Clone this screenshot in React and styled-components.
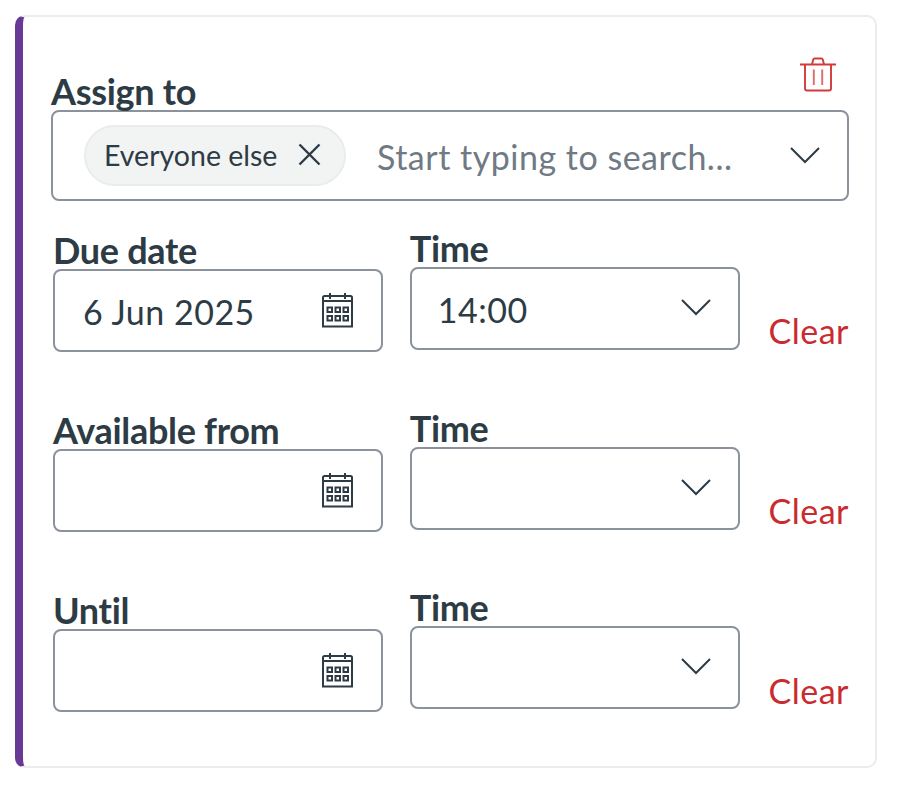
import React from 'react'
import styled, { createGlobalStyle } from 'styled-components'

const GlobalStyle = createGlobalStyle`
  html, body { margin: 0; padding: 0; background: #fff; }
  body { font-family: Lato, "Open Sans", sans-serif; color: #2d3b45; }
`

const Page = styled.div`
  padding: 15px 21px 18px 15px;
`

const Card = styled.section`
  box-sizing: border-box;
  height: 753px;
  border: 2px solid #ececec;
  border-left: 8px solid #683a96;
  border-radius: 10px;
  padding: 26px 26px 0 28px;
`

const TrashRow = styled.div`
  display: flex;
  justify-content: flex-end;
  height: 30px;
  padding-right: 13px;
  margin-top: 13px;
  margin-bottom: -12px;
  color: #d23a3a;
`

const Label = styled.label`
  display: block;
  font-size: 36px;
  font-weight: 700;
  line-height: 34px;
  height: 36px;
  letter-spacing: -0.3px;
`

const AssignField = styled.div`
  margin-bottom: 30px;
`

const AssignBox = styled.div`
  box-sizing: border-box;
  height: 91px;
  border: 2px solid #8b929c;
  border-radius: 8px;
  display: flex;
  align-items: center;
  padding: 0 27px 0 31px;
`

const Chip = styled.div`
  box-sizing: border-box;
  width: 262px;
  height: 61px;
  flex: none;
  display: flex;
  align-items: center;
  justify-content: space-between;
  padding: 0 23px 2px 18px;
  background: #f2f4f4;
  border: 2px solid #e9ecec;
  border-radius: 31px;
  font-size: 28.5px;
`

const Placeholder = styled.span`
  flex: 1;
  margin-left: 31px;
  padding-top: 2px;
  font-size: 34px;
  color: #6f7a84;
  letter-spacing: 0.5px;
`

const Row = styled.div`
  display: flex;
  align-items: flex-start;
  height: 180px;
`

const DateCol = styled.div`
  width: 330px;
  margin-left: 2px;
  padding-top: 2px;
`

const TimeCol = styled.div`
  width: 330px;
  margin-left: 27px;
  margin-top: ${p => p.$top || 0}px;
`

const Control = styled.div`
  box-sizing: border-box;
  height: 83px;
  border: 2px solid #8b929c;
  border-radius: 8px;
  display: flex;
  align-items: center;
  justify-content: space-between;
  padding: 0 27px 0 ${p => p.$left}px;
  font-size: 34px;
  letter-spacing: 0.5px;
`

const Value = styled.span`
  padding-top: 2px;
`

const Clear = styled.button`
  margin: 80px 0 0 29px;
  padding: 0;
  border: 0;
  background: none;
  font-family: inherit;
  font-size: 34px;
  line-height: 40px;
  letter-spacing: 0.5px;
  color: #c92c30;
`

const Trash = () => (
  <svg width="36" height="36" viewBox="0 0 36 36" fill="none" stroke="currentColor" strokeWidth="1.9">
    <path d="M0 8.500h36" />
    <path d="M12 8.500l1.200-5a1.500 1.500 0 0 1 1.400-1h6.800a1.500 1.500 0 0 1 1.400 1l1.200 5" />
    <path d="M5 8.500v24a2 2 0 0 0 2 2h22a2 2 0 0 0 2-2v-24" />
    <path d="M13.800 13.500v15.500M22.200 13.500v15.500" opacity="0.75" />
  </svg>
)

const CloseIcon = () => (
  <svg width="23" height="23" viewBox="0 0 23 23" fill="none" stroke="#2d3b45" strokeWidth="2.4">
    <path d="M1.500 1.500l20 20M21.500 1.500l-20 20" />
  </svg>
)

const Chevron = ({ className }) => (
  <svg className={className} width="30" height="17" viewBox="0 0 30 17" fill="none" stroke="#2d3b45" strokeWidth="2">
    <path d="M1 1l14 14L29 1" />
  </svg>
)

const TimeChevron = styled(Chevron)`
  margin-bottom: 2px;
`

const Calendar = () => (
  <svg width="32" height="35" viewBox="0 0 32 35" fill="none" stroke="#2d3b45" strokeWidth="2">
    <path d="M2.500 3h26a1.500 1.500 0 0 1 1.500 1.500V33.500H1V4.500A1.500 1.500 0 0 1 2.500 3z" />
    <path d="M1 8h29M8 0v6M23 0v6" />
    <g fill="#2d3b45" stroke="none">
      <path d="M4.500 13.500h6.500v6.500H4.500zM12.500 13.500h6.500v6.500h-6.500zM20.500 13.500h6.500v6.500h-6.500zM4.500 22h6.500v6.500H4.500zM12.500 22h6.500v6.500h-6.500zM20.500 22h6.500v6.500h-6.500z" />
    </g>
    <g fill="#fff" stroke="none">
      <path d="M6.500 15.500h2.500v2.500H6.500zM14.500 15.500h2.500v2.500h-2.500zM22.500 15.500h2.500v2.500h-2.500zM6.500 24h2.500v2.500H6.500zM14.500 24h2.500v2.500h-2.500zM22.500 24h2.500v2.500h-2.500z" />
    </g>
  </svg>
)

const rows = [
  { label: 'Due date', date: '6 Jun 2025', time: '14:00', timeTop: 0 },
  { label: 'Available from', date: '', time: '', timeTop: 0 },
  { label: 'Until', date: '', time: '', timeTop: -1 },
]

export default function App() {
  return (
    <Page>
      <GlobalStyle />
      <Card>
        <TrashRow><Trash /></TrashRow>
        <AssignField>
          <Label>Assign to</Label>
          <AssignBox>
            <Chip>Everyone else <CloseIcon /></Chip>
            <Placeholder>Start typing to search...</Placeholder>
            <Chevron />
          </AssignBox>
        </AssignField>
        {rows.map(row => (
          <Row key={row.label}>
            <DateCol>
              <Label>{row.label}</Label>
              <Control $left={28}>
                <Value>{row.date}</Value>
                <Calendar />
              </Control>
            </DateCol>
            <TimeCol $top={row.timeTop}>
              <Label>Time</Label>
              <Control $left={26}>
                <Value>{row.time}</Value>
                <TimeChevron />
              </Control>
            </TimeCol>
            <Clear>Clear</Clear>
          </Row>
        ))}
      </Card>
    </Page>
  )
}
